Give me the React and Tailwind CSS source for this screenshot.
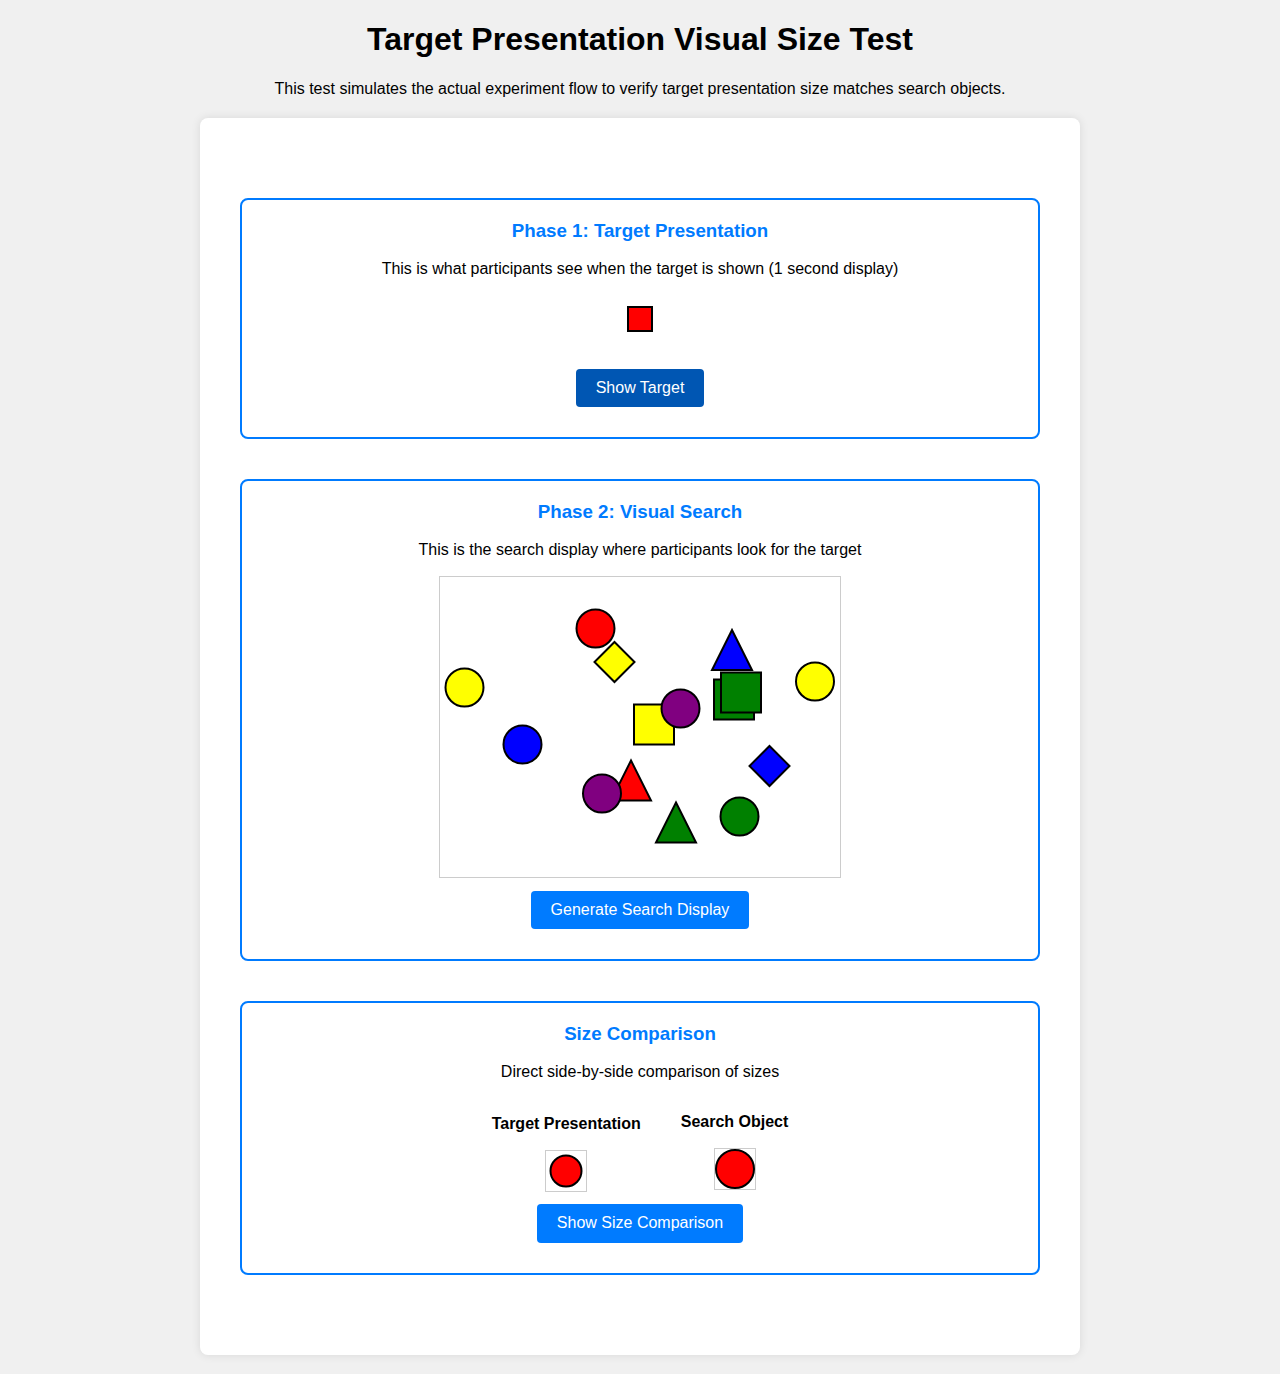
import React from "react";

const shapes = [
  { type: "circle", cx: 24.5, cy: 110.5, fill: "#ffff00" },
  { type: "circle", cx: 155.5, cy: 51.5, fill: "#ff0000" },
  { type: "diamond", cx: 174.5, cy: 85, fill: "#ffff00" },
  { type: "triangle", x: 272, y: 53, fill: "#0000ff" },
  { type: "square", x: 274, y: 102.5, fill: "#008000" },
  { type: "square", x: 281, y: 95.5, fill: "#008000" },
  { type: "circle", cx: 375, cy: 104.5, fill: "#ffff00" },
  { type: "square", x: 194, y: 127.5, fill: "#ffff00" },
  { type: "circle", cx: 240.5, cy: 131.5, fill: "#800080" },
  { type: "circle", cx: 82.5, cy: 167.5, fill: "#0000ff" },
  { type: "diamond", cx: 329.5, cy: 189, fill: "#0000ff" },
  { type: "triangle", x: 171, y: 183.5, fill: "#ff0000" },
  { type: "circle", cx: 162, cy: 216.5, fill: "#800080" },
  { type: "triangle", x: 216, y: 225.5, fill: "#008000" },
  { type: "circle", cx: 299.5, cy: 239.5, fill: "#008000" },
];

function Shape({ s }) {
  const common = { fill: s.fill, stroke: "#000", strokeWidth: 2 };
  if (s.type === "circle") return <circle cx={s.cx} cy={s.cy} r={19} {...common} />;
  if (s.type === "square") return <rect x={s.x} y={s.y} width={40} height={40} {...common} />;
  if (s.type === "triangle")
    return <polygon points={`${s.x + 20},${s.y} ${s.x + 40},${s.y + 40} ${s.x},${s.y + 40}`} {...common} />;
  return (
    <polygon
      points={`${s.cx},${s.cy - 20} ${s.cx + 20},${s.cy} ${s.cx},${s.cy + 20} ${s.cx - 20},${s.cy}`}
      {...common}
    />
  );
}

function PhaseBox({ title, text, children }) {
  return (
    <div className="border-2 border-[#007bff] rounded-[8px] p-[20px] text-center">
      <h3 className="text-[18.72px] font-bold text-[#007bff] leading-[1.15]">{title}</h3>
      <p className="mt-[18.72px] mb-[16px] text-[16px] text-black">{text}</p>
      {children}
    </div>
  );
}

function Button({ children, dark }) {
  return (
    <button
      className={
        "mt-[10px] mb-[10px] px-[20px] py-[10px] rounded-[4px] text-white text-[16px] leading-[1.15] " +
        (dark ? "bg-[#0056b3]" : "bg-[#007bff]")
      }
    >
      {children}
    </button>
  );
}

export default function App() {
  return (
    <div
      className="min-h-screen bg-[#f0f0f0] pt-[21px] leading-[1.15] text-black"
      style={{ fontFamily: '"Liberation Sans", Arial, sans-serif' }}
    >
      <h1 className="text-[32px] font-bold text-center">Target Presentation Visual Size Test</h1>
      <p className="mt-[22px] text-[16px] text-center">
        This test simulates the actual experiment flow to verify target presentation size matches search objects.
      </p>

      <div className="mt-[20px] mx-auto w-[880px] bg-white rounded-[8px] shadow-[0_0_10px_rgba(0,0,0,0.1)] px-[40px] py-[80px] flex flex-col gap-[40px]">
        {/* Phase 1 */}
        <PhaseBox
          title="Phase 1: Target Presentation"
          text="This is what participants see when the target is shown (1 second display)"
        >
          <div className="h-[64px] pt-[11px] flex justify-center">
            <div className="w-[26px] h-[26px] border-2 border-black bg-[#ff0000]" />
          </div>
          <Button dark>Show Target</Button>
        </PhaseBox>

        {/* Phase 2 */}
        <PhaseBox title="Phase 2: Visual Search" text="This is the search display where participants look for the target">
          <div className="mx-auto w-[402px] h-[302px] border border-[#ccc] bg-white">
            <svg width="400" height="300" viewBox="0 0 400 300">
              {shapes.map((s, i) => (
                <Shape key={i} s={s} />
              ))}
            </svg>
          </div>
          <div className="mt-[3px]">
            <Button>Generate Search Display</Button>
          </div>
        </PhaseBox>

        {/* Size comparison */}
        <PhaseBox title="Size Comparison" text="Direct side-by-side comparison of sizes">
          <div className="mt-[31px] flex justify-center items-start gap-[40px]">
            <div className="mt-[2px] flex flex-col items-center">
              <div className="text-[16px] font-bold">Target Presentation</div>
              <div className="mt-[17px] w-[42px] h-[42px] border border-[#ccc]">
                <svg width="40" height="40" viewBox="0 0 40 40">
                  <circle cx="20" cy="20" r="15.5" fill="#ff0000" stroke="#000" strokeWidth="2" />
                </svg>
              </div>
            </div>
            <div className="flex flex-col items-center">
              <div className="text-[16px] font-bold">Search Object</div>
              <div className="mt-[17px] w-[42px] h-[42px] border border-[#ccc]">
                <svg width="40" height="40" viewBox="0 0 40 40">
                  <circle cx="20" cy="20" r="19" fill="#ff0000" stroke="#000" strokeWidth="2" />
                </svg>
              </div>
            </div>
          </div>
          <div className="mt-[2px]">
            <Button>Show Size Comparison</Button>
          </div>
        </PhaseBox>
      </div>
    </div>
  );
}
